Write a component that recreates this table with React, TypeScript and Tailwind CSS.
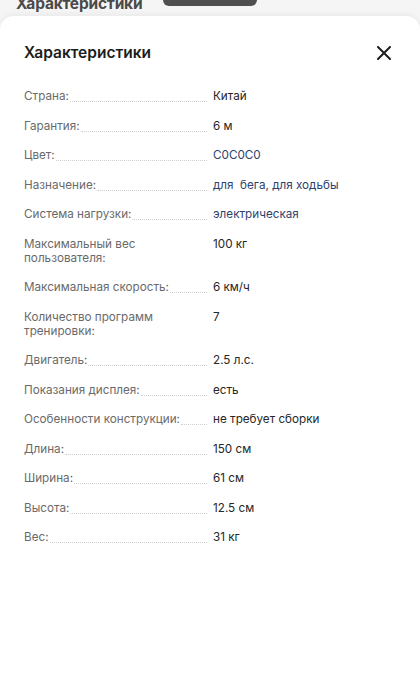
import React from "react";

const rows: { label: string; value: string; link?: boolean }[] = [
  { label: "Страна:", value: "Китай" },
  { label: "Гарантия:", value: "6 м" },
  { label: "Цвет:", value: "C0C0C0", link: true },
  { label: "Назначение:", value: "для  бега, для ходьбы", link: true },
  { label: "Система нагрузки:", value: "электрическая", link: true },
  { label: "Максимальный вес пользователя:", value: "100 кг" },
  { label: "Максимальная скорость:", value: "6 км/ч" },
  { label: "Количество программ тренировки:", value: "7" },
  { label: "Двигатель:", value: "2.5 л.с." },
  { label: "Показания дисплея:", value: "есть" },
  { label: "Особенности конструкции:", value: "не требует сборки" },
  { label: "Длина:", value: "150 см" },
  { label: "Ширина:", value: "61 см" },
  { label: "Высота:", value: "12.5 см" },
  { label: "Вес:", value: "31 кг" },
];

export default function App() {
  return (
    <div
      className="w-[420px] h-[699px] bg-[#f5f5f5] overflow-hidden relative flex flex-col"
      style={{ fontFamily: "Inter, 'Noto Sans', sans-serif" }}
    >
      <div className="relative h-[16px] shrink-0">
        <div className="absolute left-[16px] top-[-6px] text-[15.5px] font-bold text-[#4a4a4a] leading-[20px] tracking-[-0.2px]">
          Характеристики
        </div>
        <div className="absolute left-[163px] top-0 w-[94px] h-[6px] rounded-b-full bg-[#4f4f4f]" />
      </div>
      <div className="flex-1 bg-white rounded-t-[14px] shadow-[0_-2px_6px_rgba(0,0,0,0.05)] pl-6 pr-[29px] pt-[27px]">
        <div className="flex items-center justify-between h-[20px]">
          <div className="text-[15.5px] font-semibold text-[#1c1c1c] leading-[20px]">Характеристики</div>
          <svg width="14" height="14" viewBox="0 0 14 14">
            <path d="M1 1L13 13M13 1L1 13" stroke="#1f1f1f" strokeWidth="2" strokeLinecap="round" />
          </svg>
        </div>
        <div className="flex flex-col gap-[15.5px] mt-[26px]">
          {rows.map((r) => (
            <div key={r.label} className="flex text-[11.7px] leading-[14px]">
              <div className="w-[183px] shrink-0 flex items-end">
                <span className="text-[#6a6a6a]">{r.label}</span>
                <span className="flex-1 border-b border-dotted border-[#d0d0d0] mb-[1px] ml-[1px]" />
              </div>
              <div className={"ml-[6px] " + (r.link ? "text-[#2f3f6e]" : "text-[#262626]")}>
                <span className="whitespace-pre">{r.value}</span>
              </div>
            </div>
          ))}
        </div>
      </div>
    </div>
  );
}
